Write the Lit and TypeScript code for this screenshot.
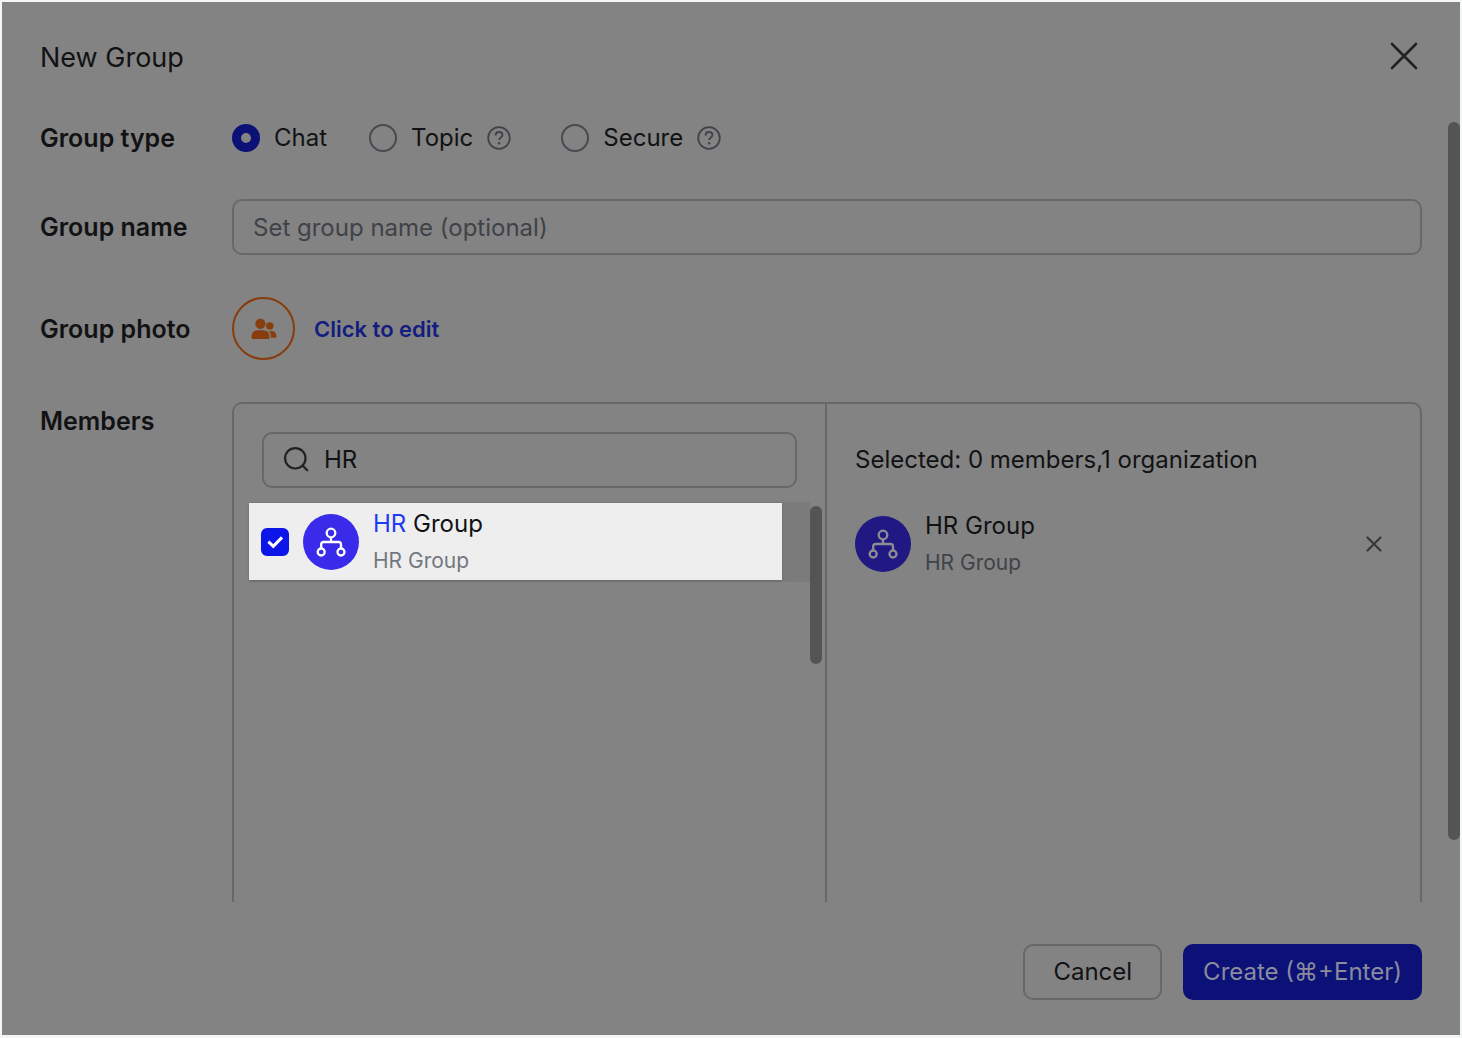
import { LitElement, html, css, svg } from "lit";
import { customElement, state } from "lit/decorators.js";

const orgIcon = svg`
  <svg viewBox="0 0 56 56" width="56" height="56" aria-hidden="true">
    <g fill="none" stroke="currentColor" stroke-width="2.3">
      <circle cx="28" cy="19" r="4.3"></circle>
      <circle cx="18.2" cy="38" r="3.5"></circle>
      <circle cx="38" cy="38" r="3.5"></circle>
      <path d="M28 23.4V28M18.2 34.5V30.6Q18.2 28 20.8 28H35.4Q38 28 38 30.6V34.5"></path>
    </g>
  </svg>`;

const helpIcon = svg`
  <svg viewBox="0 0 24 24" width="24" height="24" fill="none" stroke="currentColor" aria-hidden="true">
    <circle cx="12" cy="12" r="10.8" stroke-width="1.8"></circle>
    <path d="M8.6 9.4C8.6 7.3 10 6 12 6s3.5 1.3 3.5 3.1c0 2.3-3.4 2.5-3.4 5" stroke-width="1.9"></path>
    <circle cx="12.1" cy="17.2" r="1.2" fill="currentColor" stroke="none"></circle>
  </svg>`;

interface GroupType {
  id: string;
  label: string;
  help: boolean;
}

const GROUP_TYPES: GroupType[] = [
  { id: "chat", label: "Chat", help: false },
  { id: "topic", label: "Topic", help: true },
  { id: "secure", label: "Secure", help: true },
];

@customElement("app-root")
export class AppRoot extends LitElement {
  static styles = css`
    :host {
      display: block;
      box-sizing: border-box;
      height: 100vh;
      padding: 2px 2px 3px;
      background: #f4f5f5;
      font-family: Inter, "Liberation Sans", sans-serif;
      font-size: 24px;
      line-height: 32px;
      color: #111214;
    }
    * {
      box-sizing: border-box;
    }
    button,
    input {
      font: inherit;
      color: inherit;
      margin: 0;
    }
    button {
      padding: 0;
      border: 0;
      background: none;
      cursor: pointer;
    }
    svg {
      display: block;
    }
    .dialog {
      display: flex;
      flex-direction: column;
      height: 100%;
      background: #838383;
    }
    .head {
      display: flex;
      flex: none;
      align-items: center;
      justify-content: space-between;
      height: 108px;
      padding: 0 38px;
    }
    .title {
      margin: 0;
      padding-top: 3px;
      font-size: 27px;
      font-weight: 400;
    }
    .close {
      color: #202226;
    }
    .body {
      display: flex;
      flex: 1;
      min-height: 0;
    }
    .form {
      display: grid;
      flex: 1;
      min-width: 0;
      grid-template-columns: 192px 1fr;
      grid-template-rows: 38px auto auto 1fr;
      row-gap: 42px;
      padding: 9px 0 0 38px;
    }
    .name {
      align-self: center;
      font-size: 25px;
      font-weight: 600;
    }
    .name.top {
      align-self: start;
      padding-top: 3px;
    }
    .types {
      display: flex;
      align-items: center;
      gap: 42px;
    }
    .type {
      display: flex;
      align-items: center;
      gap: 14px;
    }
    .type label {
      display: flex;
      align-items: center;
      gap: 14px;
    }
    .radio {
      appearance: none;
      width: 28px;
      height: 28px;
      border: 2px solid #484a50;
      border-radius: 50%;
    }
    .radio:checked {
      border: 9px solid #0b1177;
    }
    .help {
      margin-right: 8px;
      color: #414349;
    }
    .text {
      width: 100%;
      height: 56px;
      padding: 0 19px;
      border: 2px solid #66686c;
      border-radius: 10px;
      background: none;
    }
    .text::placeholder {
      color: #3f4247;
      opacity: 1;
    }
    .photo {
      display: flex;
      align-items: center;
      gap: 19px;
    }
    .avatar {
      display: grid;
      place-items: center;
      width: 63px;
      height: 63px;
      border: 2px solid #873d0c;
      border-radius: 50%;
      color: #873d0c;
    }
    .edit {
      font-size: 22px;
      font-weight: 600;
      color: #131d80;
    }
    .members {
      display: grid;
      grid-template-columns: 1fr 1fr;
      min-height: 0;
      border: 2px solid #66686c;
      border-bottom: 0;
      border-radius: 10px 10px 0 0;
    }
    .picker {
      display: flex;
      flex-direction: column;
      gap: 14px;
      min-width: 0;
      padding-top: 28px;
      border-right: 2px solid #66686c;
    }
    .search {
      display: flex;
      align-items: center;
      gap: 14px;
      height: 56px;
      margin: 0 28px;
      padding: 0 20px;
      border: 2px solid #66686c;
      border-radius: 10px;
    }
    .search svg {
      flex: none;
      color: #202226;
    }
    .query {
      flex: 1;
      min-width: 0;
      padding: 0;
      border: 0;
      outline: 0;
      background: none;
    }
    .results {
      display: flex;
      flex: 1;
      min-height: 0;
      padding: 0 3px 0 15px;
    }
    .list {
      flex: 1;
      min-width: 0;
      margin: 0;
      padding: 0;
      list-style: none;
    }
    .result {
      padding: 1px 28px 2px 0;
      background: #7b7b7b;
    }
    .option {
      display: flex;
      align-items: center;
      gap: 14px;
      height: 77px;
      padding: 0 12px;
      background: #eeeeee;
      box-shadow: 0 1px 2px #666666;
    }
    .tick {
      display: grid;
      flex: none;
      width: 28px;
      height: 28px;
    }
    .tick input,
    .tick svg {
      grid-area: 1 / 1;
    }
    .tick input {
      appearance: none;
      width: 28px;
      height: 28px;
      border: 2px solid #0d16e8;
      border-radius: 6px;
    }
    .tick input:checked {
      background: #0d16e8;
    }
    .tick svg {
      color: #ffffff;
      pointer-events: none;
    }
    .badge {
      flex: none;
      width: 56px;
      height: 56px;
      border-radius: 50%;
      background: #3a2bea;
      color: #ffffff;
    }
    .badge.dim {
      background: #201883;
      color: #8d8d93;
    }
    .who {
      display: flex;
      flex: 1;
      flex-direction: column;
      gap: 6px;
      min-width: 0;
    }
    .sub {
      font-size: 21px;
      line-height: 30px;
      color: #73777f;
    }
    .who.dim .sub {
      color: #3f4247;
    }
    .hit {
      color: #1d3cf0;
    }
    .rail {
      display: flex;
      flex: none;
      justify-content: flex-end;
      width: 38px;
    }
    .rail.inner {
      width: 12px;
      padding-top: 4px;
    }
    .thumb {
      width: 12px;
      height: 40%;
      border-radius: 6px;
      background: #535553;
    }
    .rail.outer {
      padding-top: 12px;
    }
    .rail.outer .thumb {
      height: 92%;
    }
    .chosen {
      min-width: 0;
      padding: 40px 34px 0 28px;
    }
    .summary {
      margin: 0 0 28px;
    }
    .member {
      display: flex;
      align-items: center;
      gap: 14px;
      height: 79px;
    }
    .remove {
      color: #34373c;
    }
    .foot {
      display: flex;
      flex: none;
      align-items: center;
      justify-content: flex-end;
      gap: 21px;
      height: 133px;
      padding: 6px 38px 0;
    }
    .action {
      height: 56px;
      padding: 0 28px;
      border: 2px solid #66686c;
      border-radius: 10px;
    }
    .action.main {
      padding: 0 18px;
      border-color: #0b1177;
      background: #0b1177;
      color: #8a8b9c;
    }
  `;

  @state() private type = "chat";
  @state() private query = "HR";

  private renderType(t: GroupType) {
    return html`<div class="type">
      <label>
        <input
          class="radio"
          type="radio"
          name="type"
          .checked=${this.type === t.id}
          @change=${() => (this.type = t.id)}
        />${t.label}
      </label>
      ${t.help
        ? html`<button class="help" type="button" aria-label="About ${t.label}">${helpIcon}</button>`
        : ""}
    </div>`;
  }

  render() {
    return html`
      <section class="dialog" role="dialog" aria-labelledby="title">
        <header class="head">
          <h1 class="title" id="title">New Group</h1>
          <button class="close" type="button" aria-label="Close">
            <svg viewBox="0 0 36 36" width="36" height="36" fill="none" stroke="currentColor" stroke-width="2.6" stroke-linecap="round">
              <path d="M6 6L30 30M30 6L6 30"></path>
            </svg>
          </button>
        </header>
        <div class="body">
          <div class="form">
            <span class="name" id="type-name">Group type</span>
            <div class="types" role="radiogroup" aria-labelledby="type-name">
              ${GROUP_TYPES.map((t) => this.renderType(t))}
            </div>
            <label class="name" for="group-name">Group name</label>
            <input class="text" id="group-name" type="text" placeholder="Set group name (optional)" />
            <span class="name">Group photo</span>
            <div class="photo">
              <span class="avatar">
                <svg viewBox="0 0 26 22" width="26" height="22" fill="currentColor" aria-hidden="true">
                  <circle cx="9.4" cy="5.8" r="5.1"></circle>
                  <path d="M.6 20.2V18.4Q.6 12.2 7 12.2H12Q18.4 12.2 18.4 18.4V20.2Q18.4 21 17.6 21H1.4Q.6 21 .6 20.2Z"></path>
                  <circle cx="18.8" cy="8" r="3.7"></circle>
                  <path d="M18 13H19.8Q25.4 13 25.4 18.4V19Q25.4 19.7 24.7 19.7H19.9Q20.2 15.8 18 13Z"></path>
                </svg>
              </span>
              <button class="edit" type="button">Click to edit</button>
            </div>
            <span class="name top">Members</span>
            <div class="members">
              <div class="picker">
                <label class="search">
                  <svg viewBox="0 0 26 26" width="26" height="26" fill="none" stroke="currentColor" stroke-width="2.2" stroke-linecap="round" aria-hidden="true">
                    <circle cx="11.3" cy="11.3" r="10.2"></circle>
                    <path d="M18.6 18.6L23.3 23.3"></path>
                  </svg>
                  <input
                    class="query"
                    type="text"
                    aria-label="Search members"
                    .value=${this.query}
                    @input=${(e: Event) => (this.query = (e.target as HTMLInputElement).value)}
                  />
                </label>
                <div class="results">
                  <ul class="list">
                    <li class="result">
                      <label class="option">
                        <span class="tick">
                          <input type="checkbox" checked />
                          <svg viewBox="0 0 28 28" width="28" height="28" fill="none" stroke="currentColor" stroke-width="3" aria-hidden="true">
                            <path d="M7.4 13.6L12.3 18.4L21 9.4"></path>
                          </svg>
                        </span>
                        <span class="badge">${orgIcon}</span>
                        <span class="who">
                          <span><span class="hit">HR</span> Group</span>
                          <span class="sub">HR Group</span>
                        </span>
                      </label>
                    </li>
                  </ul>
                  <div class="rail inner"><div class="thumb"></div></div>
                </div>
              </div>
              <div class="chosen">
                <p class="summary">Selected: 0 members,1 organization</p>
                <div class="member">
                  <span class="badge dim">${orgIcon}</span>
                  <span class="who dim">
                    <span>HR Group</span>
                    <span class="sub">HR Group</span>
                  </span>
                  <button class="remove" type="button" aria-label="Remove HR Group">
                    <svg viewBox="0 0 24 24" width="24" height="24" fill="none" stroke="currentColor" stroke-width="2.2" stroke-linecap="round">
                      <path d="M5.5 5.5L18.5 18.5M18.5 5.5L5.5 18.5"></path>
                    </svg>
                  </button>
                </div>
              </div>
            </div>
          </div>
          <div class="rail outer"><div class="thumb"></div></div>
        </div>
        <footer class="foot">
          <button class="action" type="button">Cancel</button>
          <button class="action main" type="button">Create (⌘+Enter)</button>
        </footer>
      </section>
    `;
  }
}
